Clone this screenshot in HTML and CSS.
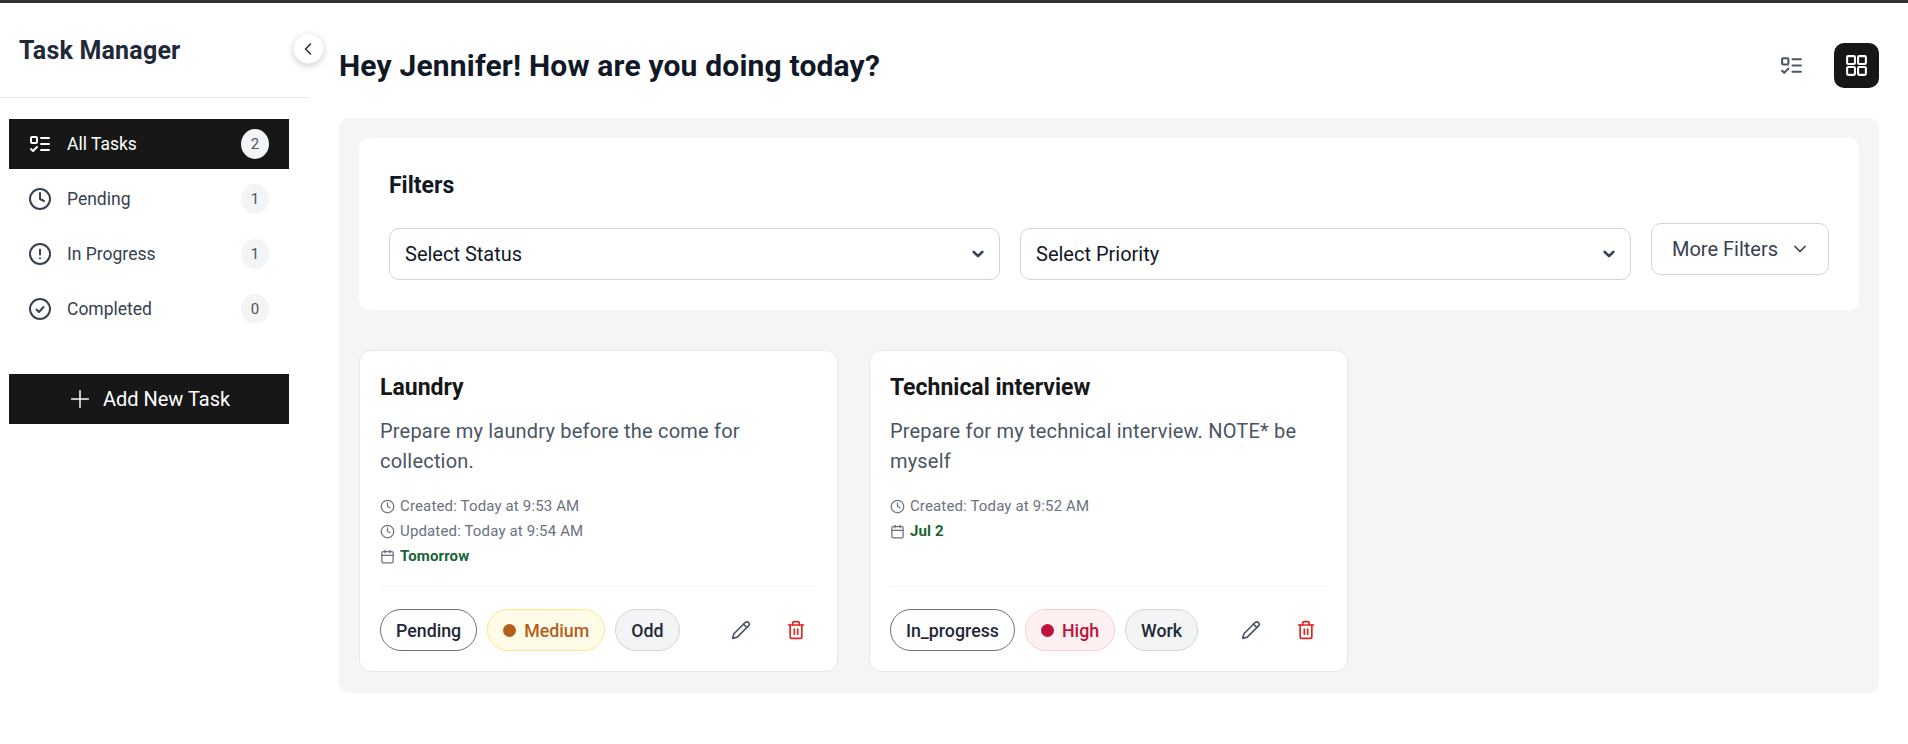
FILE: index.html
```html
<!DOCTYPE html>
<html lang="en">
<head>
    <meta charset="UTF-8">
    <meta name="viewport" content="width=device-width, initial-scale=1.0">
    <title>Task Manager</title>
    <link rel="stylesheet" href="styles.css">
</head>
<body>
    <svg class="sprites" width="0" height="0">
        <symbol id="i-list" viewBox="0 0 24 24"><rect x="3" y="5" width="6" height="6" rx="1"/><path d="m3 17 2 2 4-4"/><path d="M13 6h8"/><path d="M13 12h8"/><path d="M13 18h8"/></symbol>
        <symbol id="i-clock" viewBox="0 0 24 24"><circle cx="12" cy="12" r="10"/><path d="M12 6v6l4 2"/></symbol>
        <symbol id="i-alert" viewBox="0 0 24 24"><circle cx="12" cy="12" r="10"/><path d="M12 7.5v5"/><path d="M12 16.2v.1"/></symbol>
        <symbol id="i-check" viewBox="0 0 24 24"><circle cx="12" cy="12" r="10"/><path d="m8.5 12.5 2.5 2.5 4.5-5"/></symbol>
        <symbol id="i-cal" viewBox="0 0 24 24"><rect x="3" y="4" width="18" height="18" rx="2"/><path d="M8 2v4"/><path d="M16 2v4"/><path d="M3 10h18"/></symbol>
        <symbol id="i-pencil" viewBox="0 0 24 24"><path d="M17 3a2.8 2.8 0 1 1 4 4L7.5 20.5 2 22l1.5-5.5Z"/><path d="m15 5 4 4"/></symbol>
        <symbol id="i-trash" viewBox="0 0 24 24"><path d="M3 6h18"/><path d="M19 6v14a2 2 0 0 1-2 2H7a2 2 0 0 1-2-2V6"/><path d="M8 6V4a2 2 0 0 1 2-2h4a2 2 0 0 1 2 2v2"/><path d="M10 11v6"/><path d="M14 11v6"/></symbol>
    </svg>

    <aside class="sidebar">
        <div class="brand">
            <h2>Task Manager</h2>
        </div>
        <button class="collapse" aria-label="Collapse sidebar">
            <svg viewBox="0 0 24 24" class="icon"><path d="m15 18-6-6 6-6"/></svg>
        </button>
        <nav class="nav">
            <a class="nav-item active"><svg class="icon"><use href="#i-list"/></svg><span>All Tasks</span><b class="count">2</b></a>
            <a class="nav-item"><svg class="icon"><use href="#i-clock"/></svg><span>Pending</span><b class="count">1</b></a>
            <a class="nav-item"><svg class="icon"><use href="#i-alert"/></svg><span>In Progress</span><b class="count">1</b></a>
            <a class="nav-item"><svg class="icon"><use href="#i-check"/></svg><span>Completed</span><b class="count">0</b></a>
        </nav>
        <button class="add-task">
            <svg viewBox="0 0 24 24" class="icon"><path d="M12 2v20"/><path d="M2 12h20"/></svg>
            Add New Task
        </button>
    </aside>

    <main class="main">
        <header class="top">
            <h1>Hey Jennifer! How are you doing today?</h1>
            <div class="views">
                <button class="view"><svg class="icon"><use href="#i-list"/></svg></button>
                <button class="view on">
                    <svg viewBox="0 0 24 24" class="icon"><rect x="3" y="3" width="7.5" height="7.5" rx="1"/><rect x="13.5" y="3" width="7.5" height="7.5" rx="1"/><rect x="13.5" y="13.5" width="7.5" height="7.5" rx="1"/><rect x="3" y="13.5" width="7.5" height="7.5" rx="1"/></svg>
                </button>
            </div>
        </header>

        <section class="panel">
            <div class="filters">
                <h3>Filters</h3>
                <div class="filter-row">
                    <select><option>Select Status</option></select>
                    <select><option>Select Priority</option></select>
                    <button class="more">More Filters
                        <svg viewBox="0 0 24 24" class="icon"><path d="m6 9 6 6 6-6"/></svg>
                    </button>
                </div>
            </div>

            <div class="tasks">
                <article class="task">
                    <h4>Laundry</h4>
                    <p class="desc">Prepare my laundry before the come for collection.</p>
                    <ul class="meta">
                        <li><svg class="icon"><use href="#i-clock"/></svg>Created: Today at 9:53 AM</li>
                        <li><svg class="icon"><use href="#i-clock"/></svg>Updated: Today at 9:54 AM</li>
                        <li><svg class="icon"><use href="#i-cal"/></svg><strong>Tomorrow</strong></li>
                    </ul>
                    <footer class="task-foot">
                        <span class="chip status">Pending</span>
                        <span class="chip medium"><i class="dot"></i>Medium</span>
                        <span class="chip tag">Odd</span>
                        <div class="actions">
                            <button class="act edit"><svg class="icon"><use href="#i-pencil"/></svg></button>
                            <button class="act del"><svg class="icon"><use href="#i-trash"/></svg></button>
                        </div>
                    </footer>
                </article>

                <article class="task">
                    <h4>Technical interview</h4>
                    <p class="desc">Prepare for my technical interview. NOTE* be myself</p>
                    <ul class="meta">
                        <li><svg class="icon"><use href="#i-clock"/></svg>Created: Today at 9:52 AM</li>
                        <li><svg class="icon"><use href="#i-cal"/></svg><strong>Jul 2</strong></li>
                    </ul>
                    <footer class="task-foot">
                        <span class="chip status">In_progress</span>
                        <span class="chip high"><i class="dot"></i>High</span>
                        <span class="chip tag">Work</span>
                        <div class="actions">
                            <button class="act edit"><svg class="icon"><use href="#i-pencil"/></svg></button>
                            <button class="act del"><svg class="icon"><use href="#i-trash"/></svg></button>
                        </div>
                    </footer>
                </article>
            </div>
        </section>
    </main>
</body>
</html>
```

FILE: styles.css
```css
* {
    box-sizing: border-box;
}
html, body {
    height: 100%;
}
body {
    margin: 0;
    display: flex;
    overflow: hidden;
    border-top: 3px solid #333333;
    font-family: Roboto, "Liberation Sans", sans-serif;
    color: #111827;
    background: #ffffff;
}
button {
    font-family: inherit;
    cursor: pointer;
}
.sprites {
    position: absolute;
}
.icon {
    fill: none;
    stroke: currentColor;
    stroke-width: 2;
    stroke-linecap: round;
    stroke-linejoin: round;
    flex-shrink: 0;
}

/* sidebar */
.sidebar {
    position: relative;
    width: 309px;
    flex-shrink: 0;
}
.brand {
    height: 95px;
    padding: 29px 0 0 19px;
    border-bottom: 1px solid #e5e7eb;
}
.brand h2 {
    margin: 0;
    font-size: 25px;
    line-height: 38px;
    letter-spacing: 0.2px;
    font-weight: 700;
    color: #1f2937;
}
.collapse {
    position: absolute;
    top: 30px;
    left: 292.5px;
    width: 31px;
    height: 31px;
    padding: 0;
    display: flex;
    align-items: center;
    justify-content: center;
    border: 1px solid #f3f4f6;
    border-radius: 50%;
    background: #ffffff;
    color: #1f2937;
    box-shadow: 0 2px 6px rgba(0, 0, 0, 0.18);
}
.collapse .icon {
    width: 20px;
    height: 20px;
    stroke-width: 1.8;
}
.nav {
    display: flex;
    flex-direction: column;
    gap: 5px;
    margin: 21px 20px 0 9px;
}
.nav-item {
    height: 50px;
    display: flex;
    align-items: center;
    padding: 0 20px 0 19px;
    font-size: 17.5px;
    color: #374151;
}
.nav-item .icon {
    width: 24px;
    height: 24px;
    margin-right: 15px;
}
.nav-item span {
    flex: 1;
}
.nav-item.active {
    background: #171717;
    color: #ffffff;
}
.count {
    width: 28px;
    height: 30px;
    display: flex;
    align-items: center;
    justify-content: center;
    border-radius: 50%;
    background: #f3f4f6;
    font-size: 15px;
    font-weight: 400;
    color: #4b5563;
}
.add-task {
    width: 280px;
    height: 50px;
    margin: 40px 0 0 9px;
    padding: 0 0 0 2px;
    display: flex;
    align-items: center;
    justify-content: center;
    gap: 13px;
    border: none;
    background: #171717;
    color: #ffffff;
    font-size: 20px;
}
.add-task .icon {
    width: 20px;
    height: 20px;
    stroke-width: 1.8;
}

/* main */
.main {
    flex: 1;
    min-width: 0;
    padding: 0 29px 0 30px;
}
.top {
    height: 115px;
    display: flex;
    align-items: center;
    justify-content: space-between;
    padding-top: 9px;
}
.top h1 {
    margin: 0;
    font-size: 30px;
    letter-spacing: 0.18px;
    font-weight: 700;
    color: #111827;
}
.views {
    display: flex;
    gap: 20px;
}
.view {
    width: 45px;
    height: 45px;
    padding: 0;
    display: flex;
    align-items: center;
    justify-content: center;
    border: none;
    border-radius: 10px;
    background: transparent;
    color: #4b5563;
}
.view .icon {
    width: 25px;
    height: 25px;
}
.view.on {
    background: #171717;
    color: #ffffff;
}
.panel {
    height: 575px;
    padding: 20px;
    border-radius: 10px;
    background: #f5f5f5;
}
.filters {
    height: 172px;
    padding: 30px;
    border-radius: 10px;
    background: #ffffff;
}
.filters h3 {
    margin: 0 0 19px;
    font-size: 23px;
    line-height: 36px;
    font-weight: 700;
    color: #111827;
}
.filter-row {
    display: flex;
    align-items: flex-start;
    gap: 20px;
}
.filter-row select {
    flex: 1;
    min-width: 0;
    height: 52px;
    margin-top: 5px;
    padding: 0 40px 0 15px;
    border: 1px solid #d1d5db;
    border-radius: 10px;
    appearance: none;
    background: #ffffff url("data:image/svg+xml,%3Csvg xmlns='http://www.w3.org/2000/svg' viewBox='0 0 24 24' fill='none' stroke='%23374151' stroke-width='2.4' stroke-linecap='round' stroke-linejoin='round'%3E%3Cpath d='m8 10 4 4 4-4'/%3E%3C/svg%3E") no-repeat right 8px center / 26px 26px;
    font-family: inherit;
    font-size: 20px;
    color: #111827;
}
.more {
    width: 178px;
    height: 52px;
    padding: 0 0 0 2px;
    display: flex;
    align-items: center;
    justify-content: center;
    gap: 12px;
    border: 1px solid #d1d5db;
    border-radius: 10px;
    background: #ffffff;
    font-size: 20px;
    color: #374151;
}
.more .icon {
    width: 20px;
    height: 20px;
}

/* task cards */
.tasks {
    display: grid;
    grid-template-columns: repeat(3, 1fr);
    gap: 31.25px;
    margin-top: 40px;
    padding-right: 1.5px;
}
.task {
    height: 322px;
    display: flex;
    flex-direction: column;
    padding: 20px;
    border: 1px solid #e5e7eb;
    border-radius: 12px;
    background: #ffffff;
}
.task h4 {
    margin: 0;
    font-size: 23px;
    line-height: 33px;
    font-weight: 700;
    color: #171717;
}
.desc {
    margin: 12px 0 0;
    font-size: 20px;
    line-height: 30px;
    letter-spacing: 0.2px;
    color: #4b5563;
}
.meta {
    margin: 18px 0 0;
    padding: 0;
    list-style: none;
    font-size: 15px;
    line-height: 25px;
    letter-spacing: 0.15px;
    color: #6b7280;
}
.meta li {
    display: flex;
    align-items: center;
    gap: 5px;
}
.meta .icon {
    width: 15px;
    height: 15px;
}
.meta strong {
    font-weight: 700;
    color: #166534;
}
.task-foot {
    margin-top: auto;
    display: flex;
    align-items: center;
    gap: 10px;
    padding-top: 22px;
    border-top: 1px solid #f3f4f6;
}
.chip {
    height: 42px;
    display: flex;
    align-items: center;
    padding: 0 15px;
    border: 1px solid #d1d5db;
    border-radius: 21px;
    font-size: 17.8px;
    font-weight: 500;
}
.chip.status {
    border-color: #6b7280;
    background: #ffffff;
    color: #1f2937;
}
.chip.tag {
    background: #f3f4f6;
    color: #1f2937;
}
.chip.medium {
    border-color: #fde68a;
    background: #fefce8;
    color: #b45f1e;
}
.chip.high {
    border-color: #fecdd3;
    background: #fff1f2;
    color: #be123c;
}
.dot {
    width: 13px;
    height: 13px;
    margin-right: 8px;
    border-radius: 50%;
    background: currentColor;
}
.actions {
    margin-left: auto;
    display: flex;
    gap: 35px;
    margin-right: 11px;
}
.act {
    width: 20px;
    height: 20px;
    padding: 0;
    border: none;
    background: none;
    display: flex;
    align-items: center;
    justify-content: center;
}
.act .icon {
    width: 20px;
    height: 20px;
}
.edit {
    color: #4b5563;
}
.del {
    color: #dc2626;
}
```
